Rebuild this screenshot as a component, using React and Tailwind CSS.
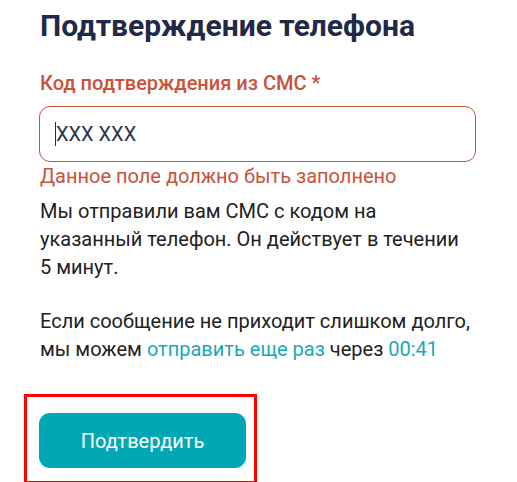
export default function App() {
  return (
    <div className="w-[517px] h-[482px] bg-white overflow-hidden" style={{ fontFamily: "Roboto, 'Liberation Sans', sans-serif" }}>
      <div className="pl-[40px] pr-[41px] pt-[8px]">
        <h1 className="text-[30px] leading-[36px] font-bold text-[#1f2a48]">Подтверждение телефона</h1>
        <div className="mt-[27px] text-[20px] leading-[24px] font-medium text-[#c9523b]">Код подтверждения из СМС *</div>
        <div className="mt-[11px] -ml-[1px] h-[56px] w-[437px] rounded-[11px] border border-[#c9523b] flex items-center pl-[15px]">
          <span className="w-[1px] h-[24px] bg-[#1f2a48]"></span>
          <span className="text-[20px] text-[#2b3550]">XXX XXX</span>
        </div>
        <div className="mt-[2px] text-[20px] leading-[24px] text-[#c9523b]">Данное поле должно быть заполнено</div>
        <p className="mt-[9px] text-[20px] leading-[28px] text-[#222222]">
          Мы отправили вам СМС с кодом на<br />указанный телефон. Он действует в течении<br />5 минут.
        </p>
        <p className="mt-[26px] text-[20px] leading-[28px] text-[#222222]">
          Если сообщение не приходит слишком долго,<br />мы можем <span className="text-[#1aa9b5]">отправить еще раз</span> через <span className="text-[#1aa9b5]">00:41</span>
        </p>
        <div className="mt-[31px] -ml-[16px] w-[233px] h-[90px] border-[3px] border-[#ff0000] pl-[12px] pt-[16px]">
          <button className="w-[207px] h-[55px] rounded-[11px] bg-[#00a8b5] text-white text-[20px]">Подтвердить</button>
        </div>
      </div>
    </div>
  );
}
